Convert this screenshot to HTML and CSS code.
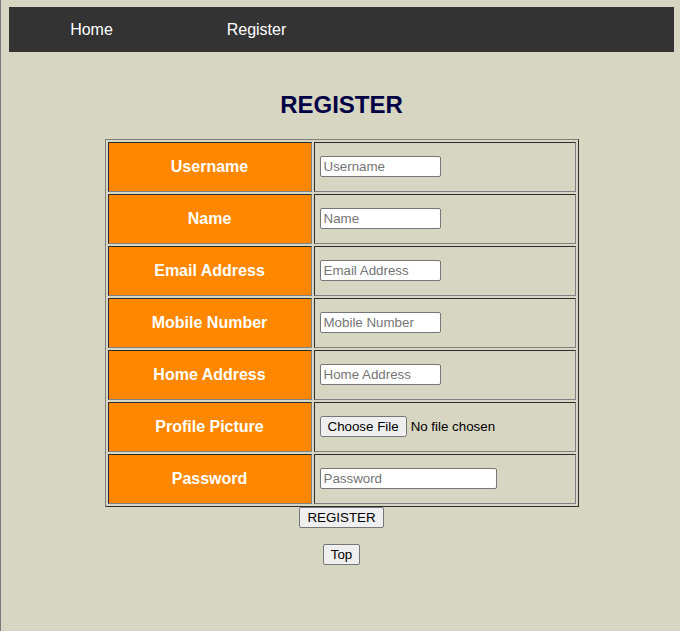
FILE: index.html
```html
<!DOCTYPE html>
<html>
<head>
<meta charset="utf-8">
<title>Register</title>
<link rel="stylesheet" href="styles.css">
</head>
<body>
<nav class="topnav">
  <a class="nav-link" href="#">Home</a>
  <a class="nav-link" href="#">Register</a>
</nav>
<main class="content">
  <h2 class="title">REGISTER</h2>
  <form class="reg-form">
    <table class="reg-table">
      <tr>
        <td class="label">Username</td>
        <td class="field"><input class="txt" type="text" placeholder="Username"></td>
      </tr>
      <tr>
        <td class="label">Name</td>
        <td class="field"><input class="txt" type="text" placeholder="Name"></td>
      </tr>
      <tr>
        <td class="label">Email Address</td>
        <td class="field"><input class="txt" type="text" placeholder="Email Address"></td>
      </tr>
      <tr>
        <td class="label">Mobile Number</td>
        <td class="field"><input class="txt" type="text" placeholder="Mobile Number"></td>
      </tr>
      <tr>
        <td class="label">Home Address</td>
        <td class="field"><input class="txt" type="text" placeholder="Home Address"></td>
      </tr>
      <tr>
        <td class="label">Profile Picture</td>
        <td class="field"><input class="file" type="file"></td>
      </tr>
      <tr>
        <td class="label">Password</td>
        <td class="field"><input class="txt pw" type="password" placeholder="Password"></td>
      </tr>
    </table>
    <button class="btn" type="button">REGISTER</button>
  </form>
  <button class="btn top-btn" type="button">Top</button>
</main>
</body>
</html>
```
FILE: styles.css
```css
html {
  height: 100%;
  box-sizing: border-box;
  border-left: 1px solid #7a7a7a;
  background: #d6d6c2;
}
body {
  margin: 7px 6px 0 8px;
  font-family: "Liberation Sans", Arial, sans-serif;
}
.topnav {
  display: flex;
  background: #333333;
  height: 45px;
}
.nav-link {
  display: block;
  width: 165px;
  text-align: center;
  line-height: 45px;
  color: #ffffff;
  text-decoration: none;
  font-size: 16px;
}
.content {
  display: flex;
  flex-direction: column;
  align-items: center;
}
.title {
  margin: 39px 0 20px;
  font-size: 24px;
  line-height: 28px;
  font-weight: bold;
  color: #000044;
}
.reg-form {
  display: flex;
  flex-direction: column;
  align-items: center;
}
.reg-table {
  border: 1px outset grey;
  border-spacing: 2px;
  table-layout: fixed;
  width: 473px;
}
.reg-table td {
  border: 1px inset grey;
  box-sizing: border-box;
  height: 50px;
  padding: 0 5px;
}
.label {
  width: 204px;
  background: #ff8800;
  color: #ffffff;
  font-weight: bold;
  font-size: 16px;
  text-align: center;
}
.reg-table .field {
  width: 262px;
  padding-bottom: 2px;
}
.txt {
  width: 121px;
  height: 21px;
  box-sizing: border-box;
  margin: 0;
  padding: 1px 3px;
  font-family: "Liberation Sans", Arial, sans-serif;
  font-size: 13.33px;
  border: 1px solid #767676;
  border-radius: 2px;
  background: #ffffff;
}
.txt.pw {
  width: 177px;
}
.file {
  margin: 0;
  font-family: "Liberation Sans", Arial, sans-serif;
  font-size: 13.33px;
}
.btn {
  margin: 0;
  font-family: "Liberation Sans", Arial, sans-serif;
  font-size: 13.33px;
  height: 21px;
  padding: 1px 7px;
  background: #efefef;
  border: 1px solid #767676;
  border-radius: 2px;
  color: #000000;
}
.top-btn {
  margin-top: 16px;
}
```
